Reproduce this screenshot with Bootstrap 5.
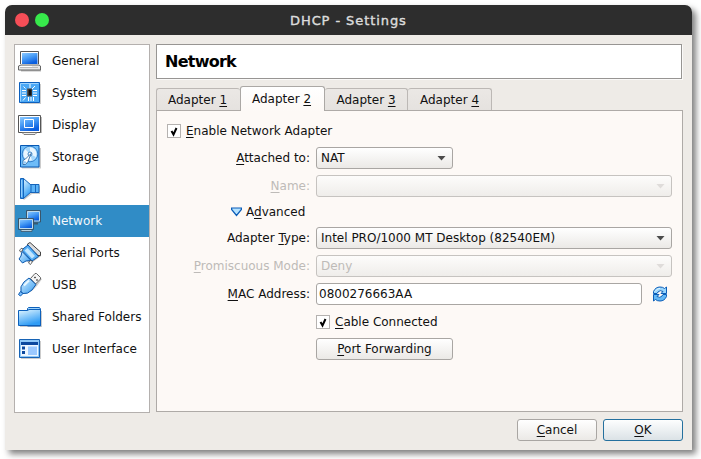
<!DOCTYPE html>
<html lang="en">
<head>
<meta charset="utf-8">
<title>DHCP - Settings</title>
<link href="https://cdn.jsdelivr.net/npm/bootstrap@5.3.0/dist/css/bootstrap.min.css" rel="stylesheet">
<style>
body{background:#fff;font-family:"DejaVu Sans",sans-serif;font-size:12px;line-height:16px;color:#111;padding:5px 9px 9px 5px;height:459px;overflow:hidden}
u{text-decoration:underline;text-decoration-thickness:1px;text-underline-offset:2px;text-decoration-skip-ink:none}
.window{width:687px;height:445px;background:#eeebe7;border-radius:7px 7px 0 0;box-shadow:4px 4px 6px rgba(0,0,0,.5)}
.titlebar{height:30px;background:#2d2d2d;border-radius:7px 7px 0 0;padding-left:10px;color:#dcdcdc}
.dot{width:14px;height:14px;border-radius:50%}
.dot-close{background:#f54e57}
.dot-max{background:#37e94b;margin-left:6px}
.caption{padding-left:241px;padding-top:2px;font-size:13px;letter-spacing:.92px;-webkit-text-stroke:.4px #dcdcdc}
.main{padding:9px 9px 0}
.sidebar{width:136px;height:369px;border:1px solid #b4b0ae;background:#fff;margin-right:6px}
.entry{height:32px;padding-left:3px}
.entry svg{width:24px;height:24px;flex:none;margin-right:10px}
.entry.active{background:#308cc6;color:#f4f8fb}
.heading{width:526px;height:35px;border:1px solid #979593;background:#fff;box-shadow:1px 1px 0 #faf9f8;padding-left:8px;font-size:16px;line-height:20px;font-weight:700;letter-spacing:-.75px;color:#000}
.tabs{height:31px}
.tab-item{height:22px;width:84px;border:1px solid #bcb8b5;border-bottom:0;border-radius:3px 3px 0 0;background:linear-gradient(#ebe8e5,#e5e2df)}
.tab-item+.tab-item{border-left-width:0}
.tab-item.current{width:85px;height:25px;background:linear-gradient(#fff,#fdf9f6);margin-bottom:-1px;border:1px solid #aba8a5;border-bottom:0;position:relative;padding:0 2px 1px 0}
.tab-item.current + .tab-item{width:83px}
.tab-item:first-child{border-right:0;padding-right:2px}
.pane{width:527px;height:302px;border:1px solid #aeaaa7;background:#fdf9f6;padding:12px 10px 0}
.tick{width:14px;height:14px;border:1px solid #b5b2b0;background:#fff;flex:none;margin-right:5px}
.tick svg{width:12px;height:12px;fill:none;stroke:#000;stroke-width:2}
.form-line{display:grid;grid-template-columns:143px 1fr;column-gap:6px;height:22px;align-items:center}
.form-line + .form-line{margin-top:6px}
.form-line>span:first-child{text-align:right;white-space:nowrap}
.combo,.push{height:22px;border:1px solid #a9a6a3;border-radius:3px;background:linear-gradient(#fff,#ebe9e6);padding:0 6px 1px 4px}
.combo svg{width:10px;height:6px;fill:#4b4b4b;flex:none;margin-top:1px}
.short{width:137px}
.off{color:#bebbb8}
.off .combo{border-color:#c6c3c0;background:linear-gradient(#fdfcfb,#efedea)}
.off .combo svg{fill:#dfdcda}
.field{width:326px;height:22px;border:1px solid #a9a6a3;border-radius:3px;background:#fff;padding:0 2px 1px}
.refresh{margin:0 0 1px 10px}
.advanced{height:16px;margin:7px 0 7px 64px}
.advanced svg{margin-right:4px}
.form-line.forward{margin-top:5px}
.footer-bar{padding:6px 9px 0;gap:6px}
.push{padding:0 0 1px;color:#111;font:inherit}
.dlg{width:80px}
.primary{border-color:#25709e;background:linear-gradient(#fdfefe,#dbe2e6)}
</style>
<script src="https://cdn.jsdelivr.net/npm/bootstrap@5.3.0/dist/js/bootstrap.bundle.min.js"></script>
</head>
<body>
<svg width="0" height="0" class="position-absolute">
<defs>
<linearGradient id="blue" x1="0" y1="0" x2="0.5" y2="1"><stop offset="0" stop-color="#8cc9ff"/><stop offset=".5" stop-color="#479bf5"/><stop offset="1" stop-color="#0b5fe0"/></linearGradient>
<linearGradient id="sky" x1="0" y1="0" x2="1" y2="1"><stop offset="0" stop-color="#d6f0ff"/><stop offset="1" stop-color="#389cf0"/></linearGradient>
<linearGradient id="fold" x1="0" y1="0" x2="0.4" y2="1"><stop offset="0" stop-color="#e4f7ff"/><stop offset="1" stop-color="#2f9cf5"/></linearGradient>
</defs>
</svg>
<div class="window">
  <header class="titlebar d-flex align-items-center">
    <span class="dot dot-close"></span><span class="dot dot-max"></span>
    <span class="caption">DHCP - Settings</span>
  </header>
  <div class="main d-flex">
    <nav class="sidebar">
      <div class="entry d-flex align-items-center"><svg viewBox="0 0 24 24"><path d="M3 20h20v2.500H3z" fill="#bbb"/><path d="M2.500 15V2.500h18V15" fill="#fff" stroke="#555"/><path d="M4 4h15.500v11H4z" fill="url(#blue)"/><path d="M3 16h18l1.500 1v4H.5v-4z" fill="#e8e8e8" stroke="#666"/><path d="M2 18.500h18" stroke="#bbb"/><path d="M2 17.500h12" stroke="#fff"/></svg>General</div>
      <div class="entry d-flex align-items-center"><svg viewBox="0 0 24 24"><path d="M3 3h20v20H3z" fill="#ccc"/><path d="M1.500 1.500h20v20h-20z" fill="#4ba8f5" stroke="#0c5fbd"/><path d="M2.500 20.500v-18h18" fill="none" stroke="#a0d4ff"/><path d="M4 9.500h4M4 12h4M4 14.500h4M15 9.500h4M15 12h4M15 14.500h4M10.500 16v4M13 16v4M15.500 16v4M12 3v4M17 5l-3 3M5 19.500l2.500-3M5.500 5.500l2 2" stroke="#fff"/><path d="M9 7.500h5v8H9z" fill="#555"/><path d="M10.500 8.500h3v6h-3z" fill="#111"/></svg>System</div>
      <div class="entry d-flex align-items-center"><svg viewBox="0 0 24 24"><path d="M3 4h21v16H3z" fill="#bbb"/><path d="M.5 2.500h22v17H.5z" fill="#fff" stroke="#555"/><path d="M2 4h19v14H2z" fill="url(#blue)"/><path d="M6.500 6.500h9v8h-9z" fill="none" stroke="#fff"/><path d="M4 19.500h15l-2 2H6z" fill="#eee" stroke="#666" stroke-width=".8"/></svg>Display</div>
      <div class="entry d-flex align-items-center"><svg viewBox="0 0 24 24"><path d="M4 3h19v20.500H4z" fill="#ccc"/><path d="M2.500 .5h18.500v21.500H2.500z" fill="#6ebcf8" stroke="#0758b4"/><circle cx="12" cy="9" r="7.800" fill="#8ecbfa" stroke="#1664b8" stroke-width=".7"/><circle cx="12" cy="9" r="6.700" fill="#eaf6ff"/><path d="M12 9L7 4a7 7 0 0 1 5-1.700zM12 9l6 3a7 7 0 0 1-4 3.500z" fill="#a5d7fc"/><circle cx="12" cy="9" r="2" fill="#fff" stroke="#3b83c5"/><path d="M5 19.500V15.500l2.500-1.500L13 8.500 10 16.500l-2.500 3z" fill="#fff" stroke="#26609a" stroke-width=".8"/><circle cx="6.800" cy="17.500" r="1.300" fill="#8dcaf9"/></svg>Storage</div>
      <div class="entry d-flex align-items-center"><svg viewBox="0 0 24 24"><path d="M4 21l2 2 8-6h8V9z" fill="#ccc"/><path d="M12.500 7.500h8.500v8h-8.500z" fill="#5bb3f7" stroke="#1564ba"/><path d="M17.500 8v7" stroke="#1c67bb"/><path d="M5.500 1.500l7.500 6.500v7l-7.500 6.500z" fill="url(#fold)" stroke="#1564ba"/><path d="M2.500 1.500h3v20h-3z" fill="#3f9df0" stroke="#1564ba"/><path d="M3.700 3v17" stroke="#a2d8ff"/></svg>Audio</div>
      <div class="entry active d-flex align-items-center"><svg viewBox="0 0 24 24"><path d="M10 13.500h10v2H10z" fill="#385a72"/><path d="M8.500 1.500h14v11.500h-14z" fill="#2b8af0" stroke="#3a566b"/><path d="M9.500 2.500h12v9.500h-12z" fill="url(#blue)" stroke="#c0dcec"/><path d="M3 20.500h11v2H3z" fill="#b8d1df" stroke="#3a566b" stroke-width=".8"/><path d="M.5 9.500h15v11H.5z" fill="#2b8af0" stroke="#3a566b"/><path d="M1.500 10.500h13v9h-13z" fill="url(#blue)" stroke="#c0dcec"/></svg>Network</div>
      <div class="entry d-flex align-items-center"><svg viewBox="0 0 24 24"><path d="M6 17l6 6 11-8-4-5z" fill="#bbb"/><path d="M9.500 3l2.500-1.500L22.500 11v3.500H20L10 5z" fill="#ddd" stroke="#444"/><path d="M10 4L20.500 15.500 14 20 3.500 9z" fill="#58b0f6" stroke="#0b58ae"/><path d="M9.500 7l7.500 8-3 2.500L6.500 9.500z" fill="#c2e6ff"/><path d="M4 10.500l9 9-5 .5-3.500 2-3.500-4 2-3z" fill="url(#sky)" stroke="#0b58ae"/><path d="M1.500 9L4 7l1 2-2.500 2zM10.500 22l2-2.500 2 1-2 3z" fill="#fff" stroke="#444" stroke-width=".8"/></svg>Serial Ports</div>
      <div class="entry d-flex align-items-center"><svg viewBox="0 0 24 24"><path d="M6 21l8-3 5-5 5-7-2-1z" fill="#ccc"/><path d="M12.500 5.500l4.500-5h1.500l4 4v1.500l-5 5z" fill="#f4f4f4" stroke="#555" stroke-width=".9"/><path d="M16.500 4l1 1M18.500 6.500l1 1" stroke="#333" stroke-width="1.500"/><path d="M3 19Q1.500 13.500 6 9l5-4 7 6.500-4 5.500q-4.500 4.500-9 3.500z" fill="url(#sky)" stroke="#0b58ae"/><path d="M6 12.500l5-5" stroke="#e8f7ff" stroke-width="2"/><path d="M2.500 18.500l2.500 2-2.500 2.500-2-1.500z" fill="#78beff" stroke="#0b58ae"/></svg>USB</div>
      <div class="entry d-flex align-items-center"><svg viewBox="0 0 24 24"><path d="M2 6h22v16H2z" fill="#ccc"/><path d="M9.500 6.500v-3l1-1h11l1 1.500v17h-13z" fill="#9ed4fc" stroke="#0d60bb"/><path d="M.5 5.500h9l1.500-1h11.500v16H.5z" fill="url(#fold)" stroke="#0d60bb"/></svg>Shared Folders</div>
      <div class="entry d-flex align-items-center"><svg viewBox="0 0 24 24"><path d="M3 4h20v18H3z" fill="#ccc"/><path d="M1.500 2.500h20v18h-20z" fill="#8fc8f8" stroke="#1763b5"/><path d="M3 5h17v14H3z" fill="#eef7ff"/><path d="M3 5h17v3H3z" fill="#0b489e"/><path d="M4 9.500h3v3H4zM4 14h3v3H4z" fill="#0b489e"/><path d="M10 9.500h9V18h-9z" fill="#9bc9ff"/></svg>User Interface</div>
    </nav>
    <main>
      <div class="heading d-flex align-items-center">Network</div>
      <div class="tabs d-flex align-items-end">
        <div class="tab-item d-flex align-items-center justify-content-center"><span>Adapter <u>1</u></span></div>
        <div class="tab-item current d-flex align-items-center justify-content-center"><span>Adapter <u>2</u></span></div>
        <div class="tab-item d-flex align-items-center justify-content-center"><span>Adapter <u>3</u></span></div>
        <div class="tab-item d-flex align-items-center justify-content-center"><span>Adapter <u>4</u></span></div>
      </div>
      <section class="pane">
        <div class="d-flex align-items-center mb-2"><span class="tick d-flex"><svg viewBox="0 0 12 12"><path d="M3.500 6L5.500 9.500 8.500 3"/></svg></span><span><u>E</u>nable Network Adapter</span></div>
        <div class="form-line"><span><u>A</u>ttached to:</span><div class="combo short d-flex align-items-center justify-content-between">NAT<svg viewBox="0 0 10 6"><path d="M1.500 1h8l-4 4.500z"/></svg></div></div>
        <div class="form-line off"><span><u>N</u>ame:</span><div class="combo d-flex align-items-center justify-content-end"><svg viewBox="0 0 10 6"><path d="M1.500 1h8l-4 4.500z"/></svg></div></div>
        <div class="advanced d-flex align-items-center"><svg width="11" height="10" viewBox="0 0 11 10"><path d="M.6 1h9.800v1.500L5.500 8.500.6 2.500z" fill="#b5e2ff" stroke="#0b5db8" stroke-width="1.200"/></svg><span>A<u>d</u>vanced</span></div>
        <div class="form-line"><span>Adapter <u>T</u>ype:</span><div class="combo d-flex align-items-center justify-content-between">Intel PRO/1000 MT Desktop (82540EM)<svg viewBox="0 0 10 6"><path d="M1.500 1h8l-4 4.500z"/></svg></div></div>
        <div class="form-line off"><span><u>P</u>romiscuous Mode:</span><div class="combo d-flex align-items-center justify-content-between">Deny<svg viewBox="0 0 10 6"><path d="M1.500 1h8l-4 4.500z"/></svg></div></div>
        <div class="form-line"><span><u>M</u>AC Address:</span><div class="d-flex align-items-center"><div class="field d-flex align-items-center">0800276663AA</div><svg class="refresh" width="16" height="16" viewBox="0 0 16 16"><path d="M1.500 7.500V5.500Q3.500 1 8 1q3 0 4.500 1.500L14.500 1v6.500H9L11 5.500Q8 3.500 6 6L5 7.500z" fill="#9ad6fc" stroke="#0b5db8"/><path d="M14.500 8.500v2Q12.500 15 8 15q-3 0-4.500-1.500L1.500 15V8.500H7L5 10.500Q8 12.500 10 10l1-1.500z" fill="#63b8f5" stroke="#0b5db8"/><path d="M3 5.500Q5 2.500 8 2.300" fill="none" stroke="#e5f6ff"/></svg></div></div>
        <div class="form-line"><span></span><div class="d-flex align-items-center"><span class="tick d-flex"><svg viewBox="0 0 12 12"><path d="M3.500 6L5.500 9.500 8.500 3"/></svg></span><span><u>C</u>able Connected</span></div></div>
        <div class="form-line forward"><span></span><button class="push short"><u>P</u>ort Forwarding</button></div>
      </section>
    </main>
  </div>
  <footer class="footer-bar d-flex justify-content-end"><button class="push dlg"><u>C</u>ancel</button><button class="push dlg primary"><u>O</u>K</button></footer>
</div>
</body>
</html>
